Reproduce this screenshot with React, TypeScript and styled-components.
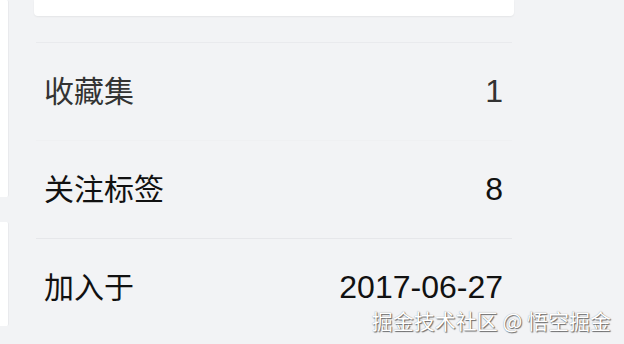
import styled, { createGlobalStyle } from 'styled-components'

const GlobalStyle = createGlobalStyle`
  html, body {
    margin: 0;
    padding: 0;
    background: #f2f3f5;
  }
  body {
    font-family: "Liberation Sans", "Noto Sans CJK SC", sans-serif;
  }
`

interface Stat {
  label: string
  value: string
  strong?: boolean
}

const stats: Stat[] = [
  { label: '收藏集', value: '1' },
  { label: '关注标签', value: '8', strong: true },
  { label: '加入于', value: '2017-06-27', strong: true },
]

function App() {
  return (
    <>
      <GlobalStyle />
      <Page>
        <Rail>
          <RailPanel $height={197} />
          <RailPanel $height={104} />
        </Rail>
        <Main>
          <TopCard />
          <StatList>
            {stats.map((s, i) => (
              <StatRow key={s.label} $divider={i === 0 ? 'faint' : i === 1 ? 'solid' : 'none'}>
                <Label $strong={s.strong}>{s.label}</Label>
                <Value $strong={s.strong}>{s.value}</Value>
              </StatRow>
            ))}
          </StatList>
        </Main>
        <Watermark>掘金技术社区 @ 悟空掘金</Watermark>
      </Page>
    </>
  )
}

const Page = styled.div`
  position: relative;
  display: flex;
  width: 624px;
  height: 344px;
  overflow: hidden;
  background: #f2f3f5;
`

const Rail = styled.div`
  display: flex;
  flex-direction: column;
  gap: 25px;
  width: 9px;
  flex-shrink: 0;
`

const RailPanel = styled.div<{ $height: number }>`
  height: ${(p) => p.$height}px;
  background: #fff;
  border-right: 1px solid #e9eaed;
  border-radius: 0 2px 2px 0;
`

const Main = styled.div`
  margin-left: 25px;
  width: 480px;
  display: flex;
  flex-direction: column;
`

const TopCard = styled.div`
  height: 16px;
  background: #fff;
  border-radius: 0 0 4px 4px;
  box-shadow: 0 1px 2px rgba(0, 0, 0, 0.06);
`

const StatList = styled.div`
  margin: 26px 2px 0;
  border-top: 1px solid #e9eaed;
`

const dividerColors = {
  faint: '#eff0f2',
  solid: '#e6e7ea',
  none: 'transparent',
}

const StatRow = styled.div<{ $divider: 'faint' | 'solid' | 'none' }>`
  height: 97px;
  display: flex;
  align-items: center;
  justify-content: space-between;
  padding: 0 9px 0 8px;
  border-bottom: 1px solid ${(p) => dividerColors[p.$divider]};
`

const Label = styled.span<{ $strong?: boolean }>`
  font-family: "Noto Sans CJK SC", sans-serif;
  font-size: 30px;
  margin-top: -5px;
  color: ${(p) => (p.$strong ? '#111' : '#333')};
`

const Value = styled.span<{ $strong?: boolean }>`
  font-family: "Liberation Sans", sans-serif;
  font-size: 32px;
  color: ${(p) => (p.$strong ? '#111' : '#333')};
`

const Watermark = styled.div`
  position: absolute;
  right: 13px;
  bottom: 12px;
  font-family: "Noto Sans CJK SC", sans-serif;
  font-size: 21px;
  line-height: 24px;
  color: #fff;
  text-shadow: 1px 1px 1px rgba(0, 0, 0, 0.55), 0 0 1px rgba(0, 0, 0, 0.4);
  white-space: nowrap;
`

export default App
